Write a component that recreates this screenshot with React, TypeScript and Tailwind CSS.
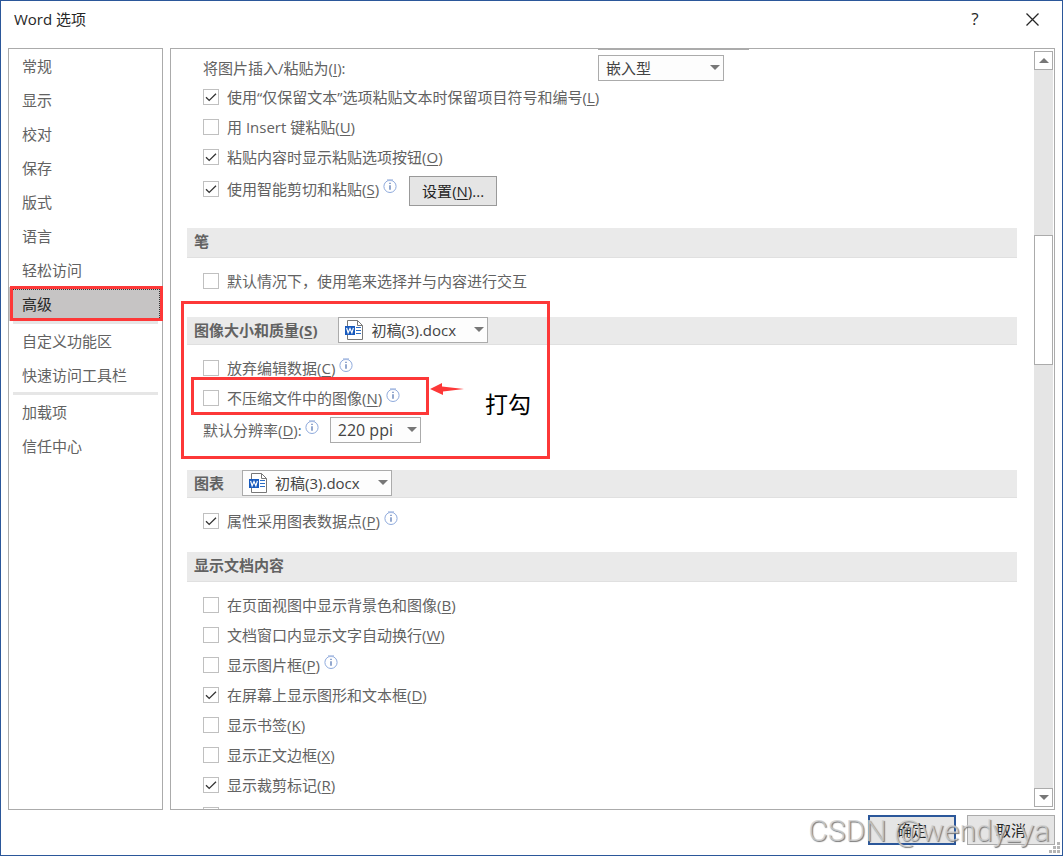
import { useState, type ReactNode } from 'react'

const navGroups = [
  ['常规', '显示', '校对', '保存', '版式', '语言', '轻松访问', '高级'],
  ['自定义功能区', '快速访问工具栏'],
  ['加载项', '信任中心'],
]

const displayOptions = [
  { text: '在页面视图中显示背景色和图像', hotkey: 'B' },
  { text: '文档窗口内显示文字自动换行', hotkey: 'W' },
  { text: '显示图片框', hotkey: 'P', info: true },
  { text: '在屏幕上显示图形和文本框', hotkey: 'D', checked: true },
  { text: '显示书签', hotkey: 'K' },
  { text: '显示正文边框', hotkey: 'X' },
  { text: '显示裁剪标记', hotkey: 'R', checked: true },
]

function Hotkey({ letter }: { letter: string }) {
  return (
    <>
      (<u className="underline-offset-2">{letter}</u>)
    </>
  )
}

function InfoIcon() {
  return (
    <svg viewBox="0 0 14 14" className="mb-[6px] size-[14px] shrink-0" aria-hidden="true">
      <circle cx="7" cy="7.4" r="6.1" fill="#fff" stroke="#8faadc" strokeWidth="1" />
      <path d="M4 1.2h6" stroke="#a9bde3" strokeWidth="1.8" />
      <path d="M7 6.2v4.6M7 3.8v1.3" stroke="#4d6fae" strokeWidth="1.2" />
    </svg>
  )
}

function WordIcon() {
  return (
    <svg viewBox="0 0 20 20" className="pointer-events-none absolute left-[6px] top-[3px] size-5" aria-hidden="true">
      <path d="M3.5 .5h10l5 5v14h-15z" fill="#fff" stroke="#777" />
      <path d="M13.5 .5v5h5" fill="none" stroke="#777" />
      <path d="M12 7.5h5M12 10.5h5M12 13.5h5" stroke="#2b6cc4" />
      <path d="M1 6h10v9H1z" fill="#185abd" />
      <path d="M2.6 7.8l1.5 5L6 8.4l1.9 4.4 1.5-5" fill="none" stroke="#fff" strokeWidth="1.2" />
    </svg>
  )
}

interface DropdownProps {
  id: string
  label: string
  value: string
  className: string
  icon?: boolean
}

function Dropdown({ id, label, value, className, icon }: DropdownProps) {
  return (
    <div className={`relative h-[26px] shrink-0 text-[#444] ${className}`}>
      <select
        id={id}
        aria-label={label}
        className={`block h-full w-full appearance-none border border-[#ababab] bg-[#fdfdfd] pr-5 ${icon ? 'pl-8' : 'pl-[7px]'}`}
      >
        <option>{value}</option>
      </select>
      {icon && <WordIcon />}
      <svg viewBox="0 0 10 5" className="pointer-events-none absolute right-1 top-[10px] h-[5px] w-[10px]" aria-hidden="true">
        <path d="M0 0h10L5 5z" fill="#777" />
      </svg>
    </div>
  )
}

interface CheckProps {
  text: string
  hotkey?: string
  checked?: boolean
  info?: boolean
}

function CheckOption({ text, hotkey, checked = false, info }: CheckProps) {
  const [on, setOn] = useState(checked)
  return (
    <label className="flex items-center">
      <span className="mr-2 grid size-4 shrink-0">
        <input
          type="checkbox"
          checked={on}
          onChange={e => setOn(e.target.checked)}
          className="peer col-start-1 row-start-1 size-4 appearance-none border border-[#c0c0c0] bg-white"
        />
        <svg viewBox="0 0 16 16" className="pointer-events-none invisible col-start-1 row-start-1 size-4 peer-checked:visible" aria-hidden="true">
          <path d="M3 8.2l3.2 3.2L13 4.8" fill="none" stroke="#333" strokeWidth="1.3" />
        </svg>
      </span>
      <span className="mr-1 whitespace-nowrap">
        {text}
        {hotkey && <Hotkey letter={hotkey} />}
      </span>
      {info && <InfoIcon />}
    </label>
  )
}

function Row({ children }: { children: ReactNode }) {
  return <div className="flex h-[30px] items-center pl-4">{children}</div>
}

function ScrollButton({ up }: { up?: boolean }) {
  return (
    <button
      aria-label={up ? '向上滚动' : '向下滚动'}
      className="grid h-[19px] w-full shrink-0 place-items-center border border-[#ababab] bg-white"
    >
      <svg viewBox="0 0 10 5" className="h-[5px] w-[10px]" aria-hidden="true">
        <path d={up ? 'M0 5h10L5 0z' : 'M0 0h10L5 5z'} fill="#777" />
      </svg>
    </button>
  )
}

export default function App() {
  const [active, setActive] = useState('高级')

  return (
    <div className="relative flex h-screen flex-col overflow-hidden border border-[#2b579a] bg-white font-['Open_Sans','Noto_Sans_CJK_SC',sans-serif] text-[15px] leading-5 text-[#626262]">
      <header className="flex h-[47px] shrink-0 items-start pl-[13px] pr-[22px] text-[#262626]">
        <h1 className="mt-2 flex-1">Word 选项</h1>
        <button aria-label="帮助" className="mt-2 w-5 text-center text-[17px]">?</button>
        <button aria-label="关闭" className="ml-10 mt-[11px] p-px">
          <svg viewBox="0 0 13 13" className="size-[13px]" aria-hidden="true">
            <path d="M.5.5l12 12M12.5.5l-12 12" stroke="#262626" strokeWidth="1.3" />
          </svg>
        </button>
      </header>

      <main className="flex min-h-0 flex-1 gap-[7px] px-[7px]">
        <nav className="w-[155px] shrink-0 border border-[#ababab]">
          {navGroups.map((group, i) => (
            <div key={group[0]}>
              {i > 0 && <div className="mx-1 h-[3px] bg-[#e6e6e6]" />}
              {group.map(item => (
                <button
                  key={item}
                  onClick={() => setActive(item)}
                  className={`relative block h-[34px] w-full pl-[13px] text-left ${item === active ? 'bg-[#c6c4c4] text-[#262626]' : ''}`}
                >
                  {item}
                  {item === '高级' && (
                    <span className="absolute -right-px -top-px bottom-0 left-px border-[3px] border-[#fd3838]">
                      <span className="block h-full border-r border-t border-dotted border-[#333]" />
                    </span>
                  )}
                </button>
              ))}
            </div>
          ))}
        </nav>

        <section className="flex min-w-0 flex-1 border border-[#ababab]">
          <div className="min-w-0 flex-1 overflow-hidden pl-4 pr-[17px]">
            <div className="ml-[411px] h-px w-[151px] bg-[#ababab]" />
            <div className="flex h-8 items-start pl-4 pt-[5px]">
              <label htmlFor="paste-as" className="mt-[3px] w-[395px]">
                将图片插入/粘贴为
                <Hotkey letter="I" />:
              </label>
              <Dropdown id="paste-as" label="将图片插入/粘贴为" value="嵌入型" className="w-[126px]" />
            </div>
            <Row><CheckOption text="使用“仅保留文本”选项粘贴文本时保留项目符号和编号" hotkey="L" checked /></Row>
            <Row><CheckOption text="用 Insert 键粘贴" hotkey="U" /></Row>
            <Row><CheckOption text="粘贴内容时显示粘贴选项按钮" hotkey="O" checked /></Row>
            <div className="flex h-[34px] items-center pl-4">
              <CheckOption text="使用智能剪切和粘贴" hotkey="S" checked info />
              <button className="ml-3 h-[30px] w-[88px] self-end border border-[#999] bg-[#e5e5e5] text-[#262626]">
                设置
                <Hotkey letter="N" />...
              </button>
            </div>

            <h2 className="mb-2 mt-[22px] h-[30px] border-b border-[#e0e0e0] bg-[#eaeaea] pl-[7px] pt-[3px] font-bold">笔</h2>
            <Row><CheckOption text="默认情况下，使用笔来选择并与内容进行交互" /></Row>

            <div className="relative mt-[21px]">
              <div className="mb-2 flex h-7 items-start border-b border-[#e0e0e0] bg-[#eaeaea] pl-[7px]">
                <h2 className="mr-[21px] mt-[3px] font-bold">
                  图像大小和质量
                  <Hotkey letter="S" />
                </h2>
                <Dropdown id="image-doc" label="图像大小和质量" value="初稿(3).docx" className="w-[150px]" icon />
              </div>
              <Row><CheckOption text="放弃编辑数据" hotkey="C" info /></Row>
              <Row><CheckOption text="不压缩文件中的图像" hotkey="N" info /></Row>
              <div className="mt-0.5 flex h-[30px] items-center pl-4">
                <label htmlFor="resolution" className="mr-[3px]">
                  默认分辨率
                  <Hotkey letter="D" />:
                </label>
                <InfoIcon />
                <Dropdown id="resolution" label="默认分辨率" value="220 ppi" className="ml-[11px] w-[91px] text-base" />
              </div>

              {/* red mark-up over the image settings */}
              <div className="pointer-events-none absolute -left-[6px] -top-4 h-[158px] w-[369px] border-[3px] border-[#fd3838]" />
              <div className="pointer-events-none absolute left-1 top-[60px] h-[38px] w-[238px] border-[3px] border-[#fd3838]" />
              <svg viewBox="0 0 34 14" className="absolute left-[243px] top-[65px] h-[14px] w-[34px]" aria-hidden="true">
                <path d="M0 7L12 1v3.5L34 7 13 9.5V13z" fill="#fd3838" />
              </svg>
              <p className="absolute left-[298px] top-[72px] text-[23px] leading-[30px] text-black">打勾</p>
            </div>

            <div className="mb-2 mt-[25px] flex h-7 items-start border-b border-[#e0e0e0] bg-[#eaeaea] pl-[7px]">
              <h2 className="mr-[18px] mt-[3px] font-bold">图表</h2>
              <Dropdown id="chart-doc" label="图表" value="初稿(3).docx" className="w-[150px]" icon />
            </div>
            <Row><CheckOption text="属性采用图表数据点" hotkey="P" checked info /></Row>

            <h2 className="mb-2 mt-4 h-[30px] border-b border-[#e0e0e0] bg-[#eaeaea] pl-[7px] pt-[3px] font-bold">显示文档内容</h2>
            {displayOptions.map(option => (
              <Row key={option.hotkey}><CheckOption {...option} /></Row>
            ))}
            <Row>
              <input type="checkbox" aria-label="更多选项" className="size-4 appearance-none border border-[#c0c0c0]" />
            </Row>
          </div>

          <div className="my-0.5 mr-px flex w-[19px] shrink-0 flex-col bg-[#e5e5e5]">
            <ScrollButton up />
            <div className="flex-[165]" />
            <div className="h-[130px] border border-[#ababab] bg-white" />
            <div className="flex-[423]" />
            <ScrollButton />
          </div>
        </section>
      </main>

      <footer className="flex shrink-0 justify-end gap-[11px] px-[7px] pb-[10px] pt-[5px] text-[#262626]">
        <button className="h-[30px] w-[88px] border-2 border-[#2b579a] bg-[#e5e5e5]">确定</button>
        <button className="h-[30px] w-[88px] border border-[#ababab] bg-[#e5e5e5]">取消</button>
      </footer>

      <svg viewBox="0 0 11 11" className="absolute bottom-0.5 right-0.5 size-[11px]" aria-hidden="true">
        <path d="M8 0h3v3H8zM4 4h3v3H4zM8 4h3v3H8zM0 8h3v3H0zM4 8h3v3H4zM8 8h3v3H8z" fill="#b5b5b5" />
      </svg>
      <span className="pointer-events-none absolute bottom-2 right-3 font-['Roboto','Liberation_Sans',sans-serif] text-[30px] font-light leading-8 text-[#d0d0d0]/80 [text-shadow:1px_1px_1px_#777]">
        CSDN @wendy_ya
      </span>
    </div>
  )
}
